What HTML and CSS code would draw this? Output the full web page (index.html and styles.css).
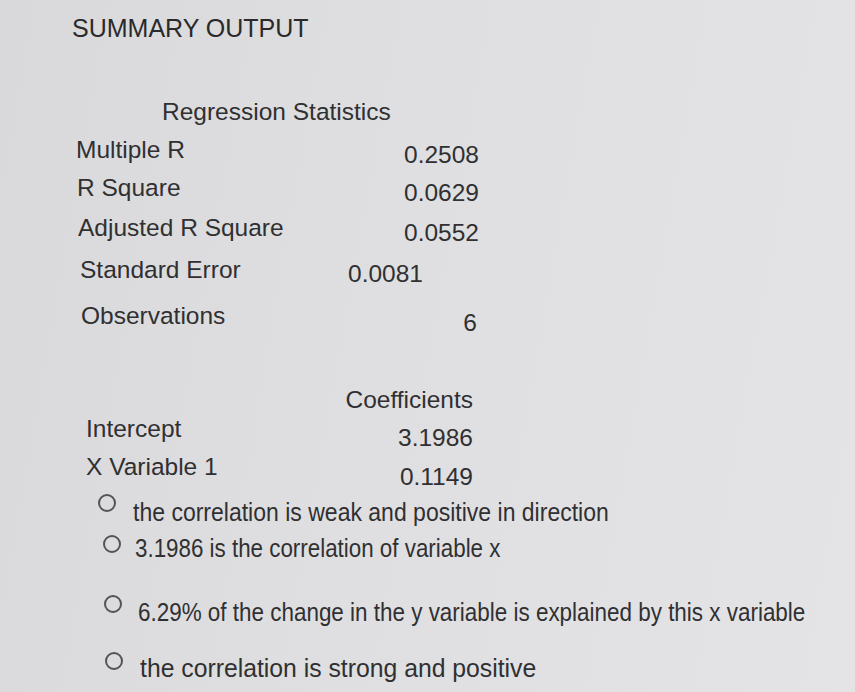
FILE: index.html
```html
<!DOCTYPE html>
<html lang="en">
<head>
<meta charset="utf-8">
<title>Summary Output</title>
<link rel="stylesheet" href="styles.css">
</head>
<body>
<main class="sheet">
  <h1 class="title">SUMMARY OUTPUT</h1>

  <section class="stats">
    <h2 class="stats-head">Regression Statistics</h2>
    <div class="stats-grid">
      <div class="row r1"><span class="label">Multiple R</span><span class="value">0.2508</span></div>
      <div class="row r2"><span class="label">R Square</span><span class="value">0.0629</span></div>
      <div class="row r3"><span class="label">Adjusted R Square</span><span class="value">0.0552</span></div>
      <div class="row r4"><span class="label">Standard Error</span><span class="value value-mid">0.0081</span></div>
      <div class="row r5"><span class="label">Observations</span><span class="value value-low">6</span></div>
    </div>
  </section>

  <section class="coef">
    <div class="coef-head">Coefficients</div>
    <div class="row c1"><span class="label">Intercept</span><span class="value">3.1986</span></div>
    <div class="row c2"><span class="label">X Variable 1</span><span class="value">0.1149</span></div>
  </section>

  <ul class="options">
    <li class="opt o1"><span class="radio"></span><span class="opt-text">the correlation is weak and positive in direction</span></li>
    <li class="opt o2"><span class="radio"></span><span class="opt-text">3.1986 is the correlation of variable x</span></li>
    <li class="opt o3"><span class="radio"></span><span class="opt-text">6.29% of the change in the y variable is explained by this x variable</span></li>
    <li class="opt o4"><span class="radio"></span><span class="opt-text">the correlation is strong and positive</span></li>
  </ul>
</main>
</body>
</html>
```

FILE: styles.css
```css
html, body {
  margin: 0;
  padding: 0;
  height: 100%;
}

body {
  background: linear-gradient(100deg, #d9d9db 0%, #dfdfe1 45%, #e4e4e6 100%);
  color: #303032;
  font-family: "Liberation Sans", Arial, sans-serif;
  font-size: 24.5px;
  overflow: hidden;
}

.sheet {
  padding-top: 13px;
}

.title {
  margin: 0 0 0 72px;
  font-size: 25px;
  font-weight: normal;
  line-height: 30px;
  color: #2a2a2c;
}

.stats {
  margin-top: 54px;
}

.stats-head {
  margin: 0 0 8px 162px;
  font-size: 24.5px;
  font-weight: normal;
  line-height: 30px;
}

.stats-grid {
  margin-left: 76px;
  width: 403px;
  display: flex;
  flex-direction: column;
}

.row {
  display: flex;
  justify-content: space-between;
  align-items: flex-start;
  line-height: 30px;
}

.value {
  padding-top: 5px;
}

.r1 { height: 38px; }
.r2 { height: 40px; padding-left: 1px; }
.r3 { height: 42px; padding-left: 2px; }
.r4 { height: 46px; padding-left: 4px; }
.r5 { height: 38px; padding-left: 5px; }

.value-mid {
  padding-right: 56px;
  padding-top: 4px;
}

.value-low {
  padding-top: 7px;
  padding-right: 2px;
}

.coef {
  margin: 46px 0 0 86px;
  width: 387px;
  display: flex;
  flex-direction: column;
}

.coef-head {
  align-self: flex-end;
  line-height: 30px;
  height: 29px;
}

.c1 { height: 38px; }
.c2 { height: 30px; }

.c1 .value { padding-top: 9px; }
.c2 .value { padding-top: 10px; }

.options {
  list-style: none;
  margin: 8px 0 0 0;
  padding: 0;
  display: flex;
  flex-direction: column;
  font-size: 26px;
}

.opt {
  display: flex;
  align-items: flex-start;
  line-height: 30px;
}

.radio {
  flex: none;
  box-sizing: border-box;
  width: 18px;
  height: 18px;
  border: 2px solid #545456;
  border-radius: 50%;
}

.opt-text {
  display: inline-block;
  white-space: nowrap;
  transform-origin: left center;
  transform: scaleX(0.885);
}

.o1 { margin-left: 98px; height: 38px; }
.o1 .radio { margin: 4px 17px 0 0; }
.o1 .opt-text { padding-top: 7px; }

.o2 { margin-left: 103px; height: 59px; }
.o2 .radio { margin: 7px 14px 0 0; }
.o2 .opt-text { padding-top: 5px; transform: scaleX(0.86); }

.o3 { margin-left: 104px; height: 57px; }
.o3 .radio { margin: 8px 16px 0 0; }
.o3 .opt-text { padding-top: 10px; transform: scaleX(0.863); }

.o4 { margin-left: 105px; }
.o4 .radio { margin: 8px 17px 0 0; }
.o4 .opt-text { padding-top: 9px; transform: scaleX(0.952); }
```
